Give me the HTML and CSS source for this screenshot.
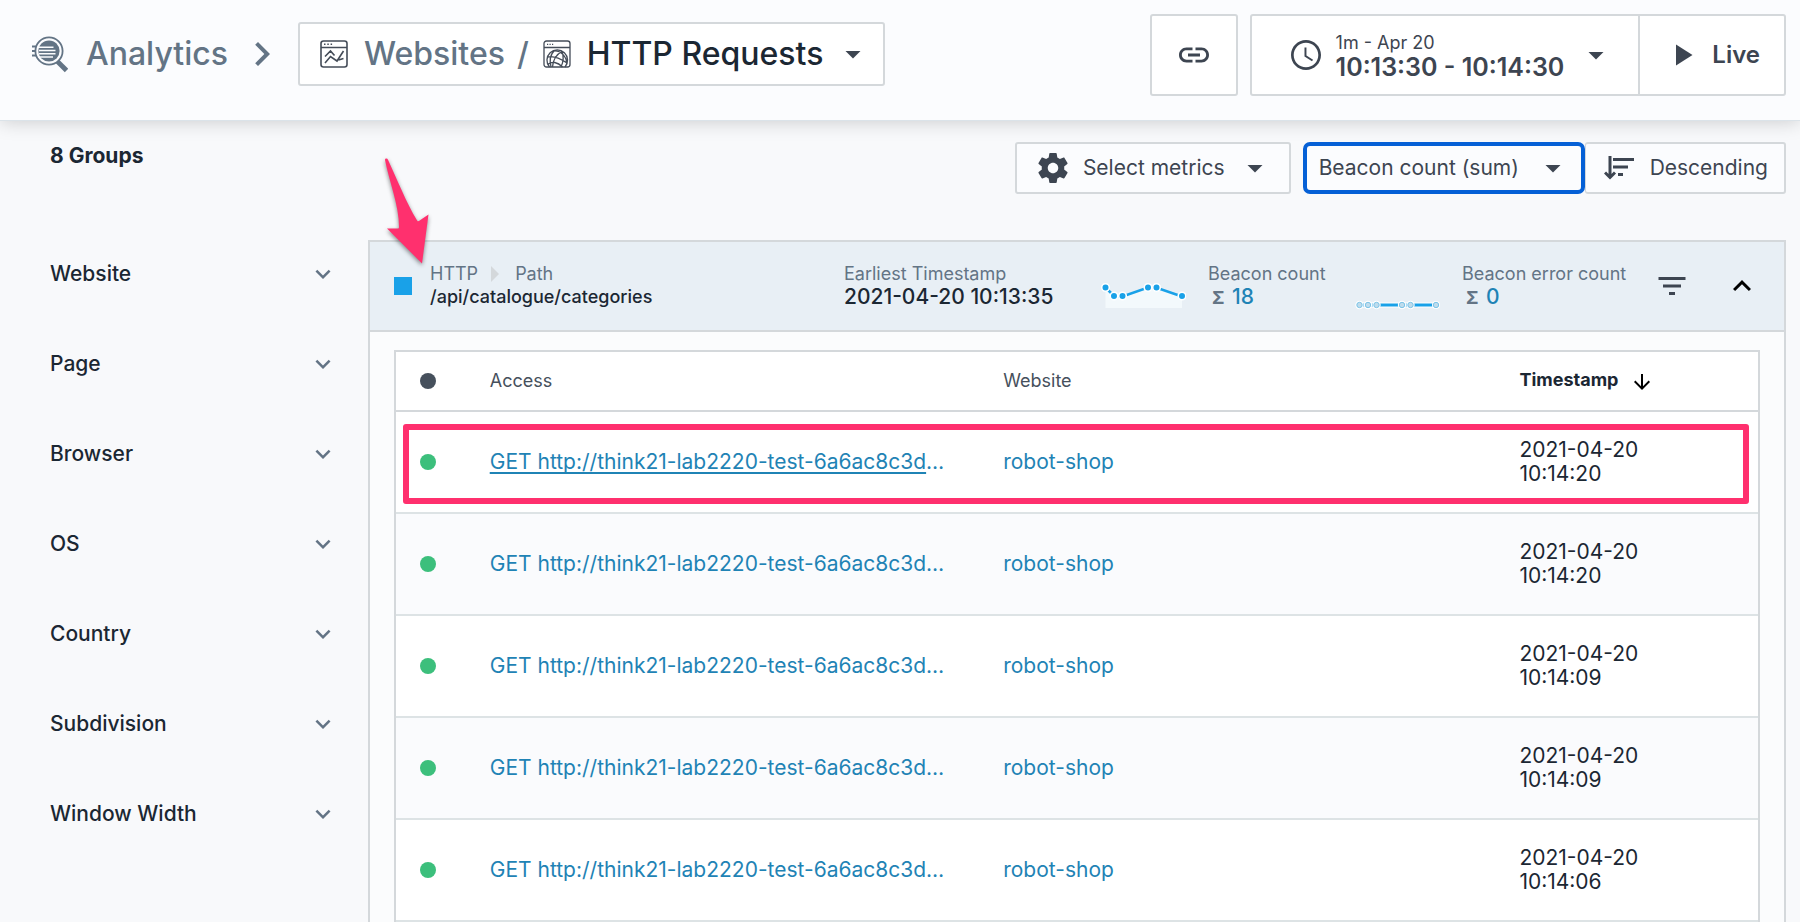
FILE: index.html
```html
<!DOCTYPE html>
<html lang="en">
<head>
<meta charset="utf-8">
<title>Analytics - HTTP Requests</title>
<link rel="stylesheet" href="styles.css">
</head>
<body>
<svg class="sprite" aria-hidden="true">
  <symbol id="caret" viewBox="0 0 24 24"><path d="M7 10l5 5 5-5z"/></symbol>
  <symbol id="more" viewBox="0 0 24 24"><path d="M16.59 8.59L12 13.17 7.41 8.59 6 10l6 6 6-6z"/></symbol>
</svg>

<header class="topbar">
  <nav class="crumbs">
    <a class="crumb-home" href="#">
      <svg class="logo" viewBox="0 0 38 38" aria-hidden="true">
        <path d="M2 11.500h7M2 16h6M2 20.500h7" stroke="currentColor" stroke-width="1.800"/>
        <path d="M27 26l9.500 9.500" stroke="currentColor" stroke-width="4.800"/>
        <circle cx="19" cy="16" r="13.600" fill="#fbfcfe" stroke="currentColor" stroke-width="1.800"/>
        <circle cx="19" cy="16" r="10.600" fill="currentColor"/>
        <path d="M8 12.300h15.500M9 15.500h16.500M9 18.800h16.500M8 22h15" stroke="#fbfcfe" stroke-width="1.400"/>
      </svg>
      <span>Analytics</span>
    </a>
    <svg class="crumb-sep" viewBox="0 0 24 24" aria-hidden="true"><path d="M10 6L8.590 7.410 13.170 12l-4.580 4.590L10 18l6-6z"/></svg>
    <button class="box crumb-box" type="button">
      <svg class="page-icon" viewBox="0 0 28 28" aria-hidden="true">
        <rect x="1" y="1" width="26" height="26" rx="2.500"/>
        <path d="M1 7.500h26M4 4.300h1.500M7.300 4.300h1.500M10.600 4.300h1.500M5 16.500l5.500-5.500 4 4.500M5 23l5.500-6.500 6.500 4.500 6.500-10M18.500 20l5-1.500"/>
      </svg>
      <span class="muted">Websites</span>
      <span class="muted slash">/</span>
      <svg class="page-icon globe" viewBox="0 0 28 28" aria-hidden="true">
        <rect x="1" y="1" width="26" height="26" rx="2.500"/>
        <path d="M1 7.500h26M4 4.300h1.200M6.500 4.300h1.200M9 4.300h1.200"/>
        <path d="M6.500 27a10.300 10.300 0 1 1 15.500 0M4.500 17c6-1.500 12 1 19.500 6M5.500 24c3-3 9-2 14 3M11 11c-4 4-4.500 10-3 16M11 11c7-.5 13 6 12.500 12.500M19 11.500c-6 3-9 9-9.500 15.500M19 11.500c2 5 1.500 10-1 15.500"/>
      </svg>
      <span>HTTP Requests</span>
      <svg class="icon" aria-hidden="true"><use href="#caret"/></svg>
    </button>
  </nav>
  <div class="controls">
    <button class="box link-box" type="button" aria-label="Copy link">
      <svg class="icon" viewBox="0 0 24 24" aria-hidden="true"><path d="M3.900 12c0-1.710 1.390-3.100 3.100-3.100h4V7H7c-2.760 0-5 2.240-5 5s2.240 5 5 5h4v-1.900H7c-1.710 0-3.100-1.390-3.100-3.100zM8 13h8v-2H8v2zm9-6h-4v1.900h4c1.710 0 3.100 1.390 3.100 3.100s-1.390 3.100-3.100 3.100h-4V17h4c2.760 0 5-2.240 5-5s-2.240-5-5-5z"/></svg>
    </button>
    <div class="box time-box">
      <button class="time" type="button">
        <svg class="icon" viewBox="0 0 24 24" aria-hidden="true"><path d="M11.990 2C6.470 2 2 6.480 2 12s4.470 10 9.990 10C17.520 22 22 17.520 22 12S17.520 2 11.990 2zM12 20.200c-4.530 0-8.200-3.670-8.200-8.200S7.470 3.800 12 3.800s8.200 3.670 8.200 8.200-3.670 8.200-8.200 8.200zM12.300 7H11v6l5 3.200.700-1.100-4.400-2.800z"/></svg>
        <span class="time-text"><span class="time-span">1m - Apr 20</span><span class="time-range">10:13:30 - 10:14:30</span></span>
        <svg class="icon" aria-hidden="true"><use href="#caret"/></svg>
      </button>
      <button class="live" type="button">
        <svg class="icon" viewBox="0 0 24 24" aria-hidden="true"><path d="M8 5v14l11-7z"/></svg>
        <span>Live</span>
      </button>
    </div>
  </div>
</header>

<div class="content">
  <aside class="side">
    <h2>8 Groups</h2>
    <ul>
      <li><button type="button">Website<svg aria-hidden="true"><use href="#more"/></svg></button></li>
      <li><button type="button">Page<svg aria-hidden="true"><use href="#more"/></svg></button></li>
      <li><button type="button">Browser<svg aria-hidden="true"><use href="#more"/></svg></button></li>
      <li><button type="button">OS<svg aria-hidden="true"><use href="#more"/></svg></button></li>
      <li><button type="button">Country<svg aria-hidden="true"><use href="#more"/></svg></button></li>
      <li><button type="button">Subdivision<svg aria-hidden="true"><use href="#more"/></svg></button></li>
      <li><button type="button">Window Width<svg aria-hidden="true"><use href="#more"/></svg></button></li>
    </ul>
  </aside>

  <main class="main">
    <div class="toolbar">
      <button class="tool metrics" type="button">
        <svg class="icon" viewBox="0 0 24 24" aria-hidden="true"><path d="M19.430 12.980c.040-.320.070-.640.070-.980s-.030-.660-.070-.980l2.110-1.650c.190-.150.240-.420.120-.640l-2-3.460c-.120-.220-.390-.300-.610-.220l-2.490 1c-.520-.400-1.080-.730-1.690-.980l-.380-2.650C14.460 2.180 14.250 2 14 2h-4c-.250 0-.460.180-.490.420l-.380 2.650c-.610.250-1.170.590-1.690.980l-2.490-1c-.230-.090-.490 0-.610.220l-2 3.460c-.130.220-.070.490.120.640l2.110 1.650c-.040.320-.070.650-.070.980s.030.660.070.980l-2.110 1.650c-.190.150-.240.420-.120.640l2 3.460c.120.220.390.300.610.220l2.490-1c.520.400 1.080.730 1.690.980l.380 2.650c.030.240.240.420.490.420h4c.250 0 .460-.180.490-.420l.380-2.650c.610-.250 1.170-.590 1.690-.980l2.490 1c.230.090.490 0 .610-.220l2-3.460c.120-.220.070-.490-.120-.640l-2.110-1.650zM12 15.500c-1.930 0-3.500-1.570-3.500-3.500s1.570-3.500 3.500-3.500 3.500 1.570 3.500 3.500-1.570 3.500-3.500 3.500z"/></svg>
        <span>Select metrics</span>
        <svg class="icon" aria-hidden="true"><use href="#caret"/></svg>
      </button>
      <div class="sorting">
        <div class="sort-by">
          <select aria-label="Sort by metric"><option>Beacon count (sum)</option><option>Beacon error count (sum)</option></select>
          <svg class="icon" aria-hidden="true"><use href="#caret"/></svg>
        </div>
        <button class="tool order" type="button">
          <svg class="sort-icon" viewBox="0 0 30 26" aria-hidden="true"><path d="M6 1v21M1 17.500l5 5 5-5" fill="none" stroke="currentColor" stroke-width="3"/><path d="M9 3h21v3H9zM9 10.500h15v3H9zM14 18h5v3h-5z"/></svg>
          <span>Descending</span>
        </button>
      </div>
    </div>

    <section class="group">
      <div class="group-head">
        <span class="swatch"></span>
        <div class="fact path">
          <span class="label">HTTP <svg class="path-sep" viewBox="0 0 8 16" aria-hidden="true"><path d="M0 0l8 8-8 8z"/></svg> Path</span>
          <strong class="path-value">/api/catalogue/categories</strong>
        </div>
        <div class="fact"><span class="label">Earliest Timestamp</span><strong>2021-04-20 10:13:35</strong></div>
        <svg class="spark" viewBox="0 0 88 28" aria-hidden="true">
          <path d="M7.500 5.500l9 9h8L50 5.500h8l26 9V26H7.500z" fill="#f3f9fc"/>
          <path d="M7.500 5.500l9 9h8L50 5.500h8l26 9" fill="none" stroke="#19a1e8" stroke-width="2.600"/>
          <g fill="#19a1e8" stroke="#fff" stroke-width="1.600"><circle cx="7.500" cy="5.500" r="3.800"/><circle cx="16" cy="14" r="3.800"/><circle cx="24.500" cy="14" r="3.800"/><circle cx="50" cy="5.500" r="3.800"/><circle cx="58.500" cy="5.500" r="3.800"/><circle cx="84" cy="14" r="3.800"/></g>
        </svg>
        <div class="fact"><span class="label">Beacon count</span><span class="sum"><b>Σ</b> <a href="#">18</a></span></div>
        <svg class="spark" viewBox="0 0 88 28" aria-hidden="true">
          <path d="M7.500 23H84" stroke="#fff" stroke-width="5"/>
          <path d="M7.500 23H84" stroke="#19a1e8" stroke-width="3"/>
          <g fill="#fff"><circle cx="7.500" cy="23" r="4.200"/><circle cx="16" cy="23" r="4.200"/><circle cx="24.500" cy="23" r="4.200"/><circle cx="50" cy="23" r="4.200"/><circle cx="58.500" cy="23" r="4.200"/><circle cx="84" cy="23" r="4"/></g>
          <g fill="#bfdcec" stroke="#7cc4e8" stroke-width="1"><circle cx="7.500" cy="23" r="2.700"/><circle cx="16" cy="23" r="2.700"/><circle cx="24.500" cy="23" r="2.700"/><circle cx="50" cy="23" r="2.700"/><circle cx="58.500" cy="23" r="2.700"/><circle cx="84" cy="23" r="2.700"/></g>
        </svg>
        <div class="fact"><span class="label">Beacon error count</span><span class="sum"><b>Σ</b> <a href="#">0</a></span></div>
        <button class="plain" type="button" aria-label="Filter"><svg class="icon" viewBox="0 0 24 24" aria-hidden="true"><path d="M10 18h4v-2h-4v2zM3 6v2h18V6H3zm3 7h12v-2H6v2z"/></svg></button>
        <button class="plain toggle" type="button" aria-label="Collapse"><svg class="icon" viewBox="0 0 24 24" aria-hidden="true"><path d="M12 8l-6 6 1.410 1.410L12 10.830l4.590 4.580L18 14z"/></svg></button>
        <svg class="pointer" viewBox="0 0 56 112" aria-hidden="true"><path d="M7 3C7 1.300 9.300 1 10 2.700C18 20 29 47 38.500 62.500c1 1.800 1.500 2.200 2.800 1.300L50.500 57.500 44 106.500 9 71.500h10.500c1.200 0 1.500-.5 1.500-1.500C21 48 11 24 7 3z"/></svg>
      </div>

      <div class="group-body">
        <table class="beacons">
          <colgroup><col class="c-status"><col class="c-access"><col class="c-site"><col class="c-time"></colgroup>
          <thead>
            <tr><th scope="col" aria-label="Status"><span class="dot"></span></th><th scope="col">Access</th><th scope="col">Website</th><th scope="col" class="sorted">Timestamp<svg viewBox="0 0 24 24" aria-hidden="true"><path d="M20 12l-1.410-1.410L13 16.170V4h-2v12.170l-5.580-5.590L4 12l8 8 8-8z"/></svg></th></tr>
          </thead>
          <tbody>
            <tr class="marked"><td><span class="dot"></span></td><td><a class="hovered" href="#">GET http://think21-lab2220-test-6a6ac8c3d</a><span class="cut">…</span></td><td><a href="#">robot-shop</a></td><td>2021-04-20<br>10:14:20</td></tr>
            <tr><td><span class="dot"></span></td><td><a href="#">GET http://think21-lab2220-test-6a6ac8c3d…</a></td><td><a href="#">robot-shop</a></td><td>2021-04-20<br>10:14:20</td></tr>
            <tr><td><span class="dot"></span></td><td><a href="#">GET http://think21-lab2220-test-6a6ac8c3d…</a></td><td><a href="#">robot-shop</a></td><td>2021-04-20<br>10:14:09</td></tr>
            <tr><td><span class="dot"></span></td><td><a href="#">GET http://think21-lab2220-test-6a6ac8c3d…</a></td><td><a href="#">robot-shop</a></td><td>2021-04-20<br>10:14:09</td></tr>
            <tr><td><span class="dot"></span></td><td><a href="#">GET http://think21-lab2220-test-6a6ac8c3d…</a></td><td><a href="#">robot-shop</a></td><td>2021-04-20<br>10:14:06</td></tr>
          </tbody>
        </table>
      </div>
    </section>
  </main>
</div>
</body>
</html>
```
FILE: styles.css
```css
* { box-sizing: border-box; }

body {
  margin: 0;
  background: #f8f9fb;
  color: #1b2733;
  font: 400 21px/24px Inter, "Liberation Sans", sans-serif;
}

button, select {
  margin: 0;
  padding: 0;
  border: 0;
  background: none;
  color: inherit;
  font: inherit;
}

a { color: #1f83b5; text-decoration: none; }
svg { display: block; flex: none; fill: currentColor; }
.sprite { position: absolute; width: 0; height: 0; }
.icon { width: 36px; height: 36px; }

.topbar {
  position: relative;
  display: flex;
  justify-content: space-between;
  align-items: flex-start;
  height: 120px;
  padding: 14px 14px 0 30px;
  background: #fbfcfe;
  box-shadow: 0 1px 0 #dbe3e9, 0 2px 18px rgba(0, 0, 0, .18);
  color: #3d4551;
}

.box {
  border: 2px solid #d4d8db;
  border-radius: 3px;
  background: #fff;
}

.crumbs {
  display: flex;
  align-items: center;
  margin-top: 8px;
  font-size: 32px;
  font-weight: 500;
  line-height: 40px;
}
.crumb-home { display: flex; align-items: center; gap: 18px; color: #637485; }
.logo { width: 38px; height: 38px; }
.crumb-sep { width: 48px; height: 48px; margin: 0 12px 0 10px; color: #637485; }
.crumb-box {
  display: flex;
  align-items: center;
  height: 64px;
  padding: 0 12px 0 20px;
  color: #1b2733;
}
.crumb-box .icon { margin-left: 12px; color: #3d4551; }
.muted { color: #637485; }
.slash { margin: 0 14px 0 12px; }
.page-icon {
  width: 28px;
  height: 28px;
  margin-right: 16px;
  fill: none;
  stroke: #444c58;
  stroke-width: 1.6;
}
.globe { stroke-width: 1.3; }

.controls { display: flex; gap: 12px; }
.link-box { display: grid; place-items: center; width: 88px; height: 82px; }
.time-box { display: flex; height: 82px; font-weight: 600; }
.time { display: flex; align-items: center; padding: 0 24px 0 36px; }
.time-text { display: grid; margin: 0 14px 0 12px; text-align: left; }
.time-span { font-size: 18px; font-weight: 400; }
.time-range { font-size: 25px; }
.live {
  display: flex;
  align-items: center;
  gap: 12px;
  padding: 0 24px 0 24px;
  border-left: 2px solid #d4d8db;
  font-size: 24px;
}

.content { display: flex; }
.side { flex: none; width: 368px; padding: 24px 30px 0 50px; }
.side h2 { margin: 0 0 61px; font-size: 21px; font-weight: 700; }
.side ul { margin: 0; padding: 0; list-style: none; }
.side button {
  display: flex;
  justify-content: space-between;
  align-items: center;
  width: 100%;
  height: 90px;
  font-weight: 500;
}
.side svg { width: 30px; height: 30px; color: #637485; }

.main { flex: 1; min-width: 0; padding: 22px 14px 0 0; }
.toolbar { display: flex; justify-content: flex-end; gap: 12px; color: #3d4551; }
.tool {
  display: flex;
  align-items: center;
  height: 52px;
  border: 2px solid #d4d8db;
  border-radius: 3px;
  background: #fbfcfe;
}
.metrics { gap: 12px; padding: 0 16px 0 18px; }
.sorting { display: flex; }
.sort-by { display: grid; align-items: center; width: 282px; }
.sort-by > * { grid-area: 1 / 1; }
.sort-by select {
  width: 100%;
  height: 52px;
  padding: 0 56px 0 12px;
  appearance: none;
  border: 4px solid #0560d6;
  border-radius: 7px;
  background: #fbfcfe;
}
.sort-by .icon { justify-self: end; margin-right: 14px; pointer-events: none; }
.order { gap: 16px; padding: 0 16px 0 18px; border-left-width: 1px; }
.sort-icon { width: 30px; height: 26px; }

.group { margin-top: 46px; border: 2px solid #d4d8db; border-bottom: 0; background: #fbfcfd; }
.group-head {
  position: relative;
  display: grid;
  grid-template-columns: 36px minmax(0, 1fr) 254px 110px 144px 110px 192px 70px 60px;
  align-items: center;
  height: 90px;
  padding-left: 24px;
  border-bottom: 2px solid #d4d8db;
  background: #e8eff5;
}
.swatch { width: 18px; height: 18px; background: #19a1e8; }
.fact { display: grid; white-space: nowrap; }
.fact strong { font-weight: 500; }
.fact .path-value { font-size: 18px; }
.label { display: flex; align-items: center; font-size: 18px; line-height: 22px; color: #637485; }
.path-sep { width: 8px; height: 16px; margin: 0 16px 0 13px; color: #d4d8db; }
.spark { width: 88px; height: 28px; margin-top: 20px; }
.sum { padding-left: 4px; font-weight: 500; }
.sum b { margin-right: 2px; font-size: 18px; font-weight: 700; color: #637485; }
.plain { justify-self: start; color: #3d4551; }
.toggle { color: #000; }

.pointer {
  position: absolute;
  left: 8px;
  top: -85px;
  width: 56px;
  height: 112px;
  color: #ff306e;
  filter: drop-shadow(0 2px 2px rgba(0, 0, 0, .45));
}

.group-body { padding: 18px 24px 0; }
.beacons {
  width: 100%;
  table-layout: fixed;
  border: 2px solid #d4d8db;
  border-bottom: 0;
  border-spacing: 0;
  background: #fff;
  text-align: left;
}
.c-status { width: 6%; }
.c-access { width: 37.7%; }
.c-site { width: 37.9%; }
.c-time { width: 18.4%; }
th { height: 60px; padding: 0 12px; border-bottom: 2px solid #d4d8db; font-size: 18px; font-weight: 400; color: #46505c; }
td { height: 102px; padding: 0 12px; border-bottom: 2px solid #dde3e5; }
th:first-child, td:first-child { padding: 0 24px; }
tbody tr:nth-child(even) { background: #fafbfd; }
.sorted { font-weight: 700; color: #1b2733; }
.sorted svg { display: inline-block; width: 24px; height: 24px; margin-left: 12px; color: #000; vertical-align: middle; }
.dot { display: block; width: 16px; height: 16px; border-radius: 50%; background: #46505c; }
td .dot { background: #3cbf7c; }
.hovered { text-decoration: underline; text-decoration-thickness: 2px; text-underline-offset: 3px; text-decoration-skip-ink: none; }
.cut { color: #1f83b5; }
.marked { position: relative; }
.marked::after {
  content: "";
  position: absolute;
  inset: 12px 9px 10px 7px;
  border: 6px solid #ff306e;
  border-radius: 3px;
}
```
